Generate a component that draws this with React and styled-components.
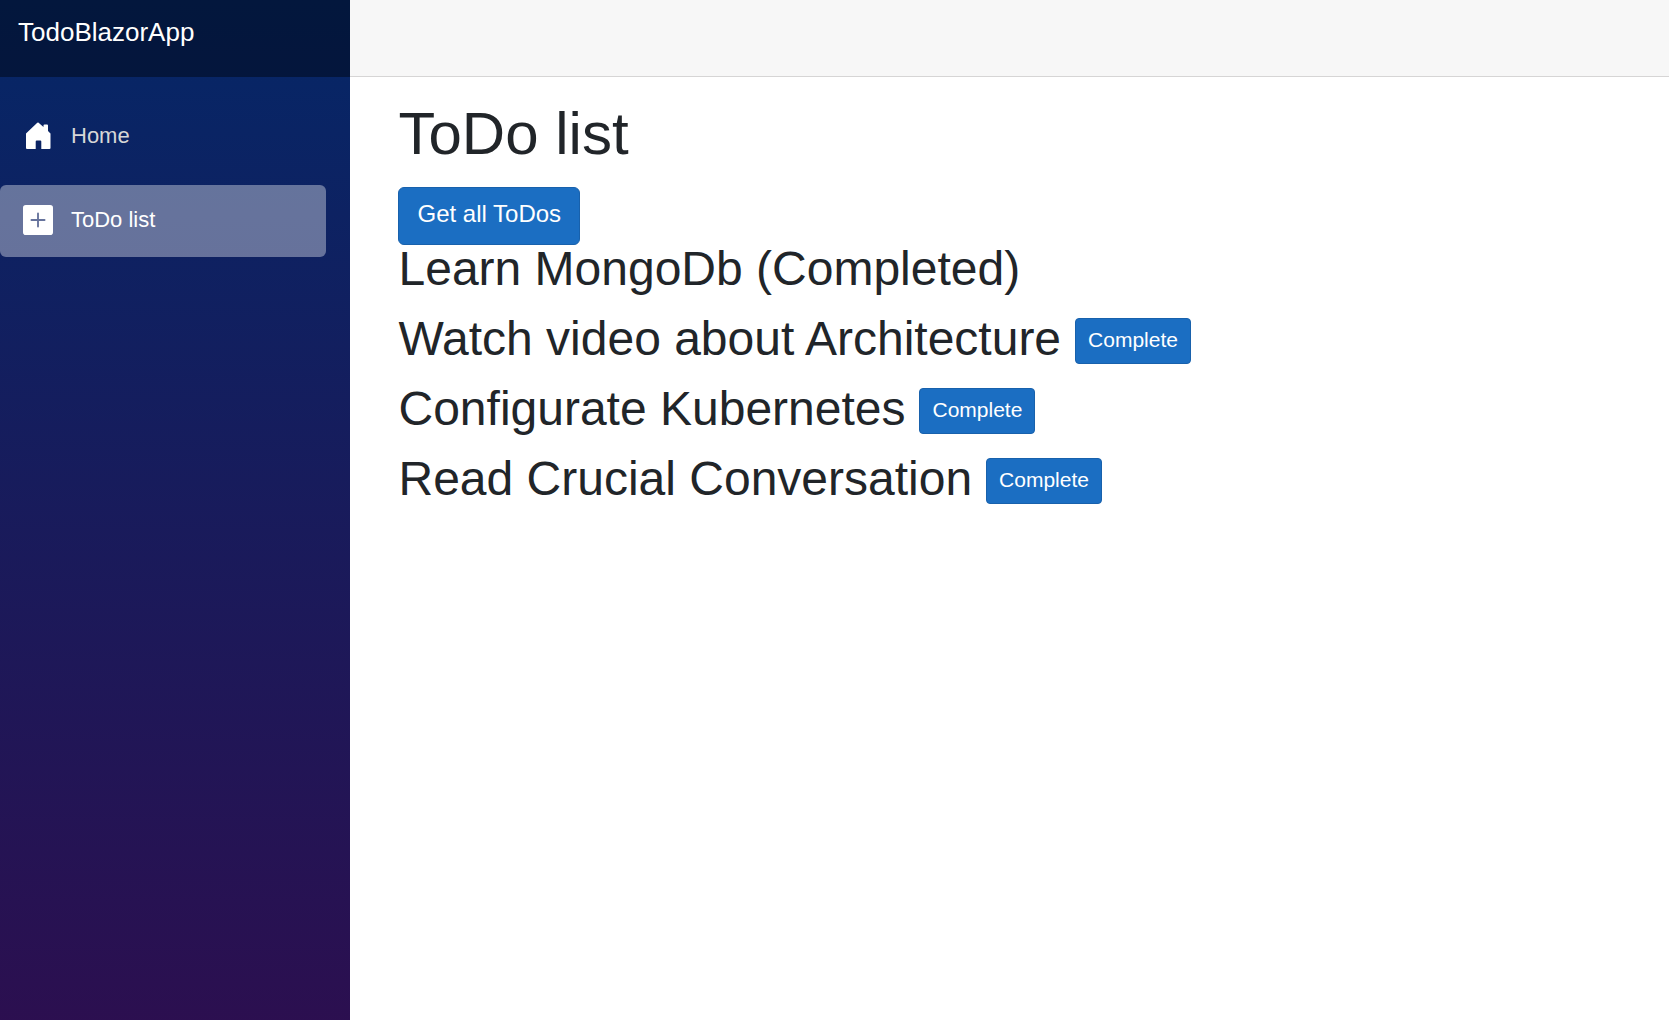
import React from "react";
import styled, { createGlobalStyle } from "styled-components";

const Global = createGlobalStyle`
  *, *::before, *::after { box-sizing: border-box; }
  body {
    margin: 0;
    font-family: "Liberation Sans", Arial, sans-serif;
    font-size: 22px;
    line-height: 1.5;
    color: #212529;
    background: #fff;
  }
`;

const Page = styled.div`
  display: flex;
  min-height: 100vh;
`;

const Sidebar = styled.aside`
  flex: 0 0 21%;
  background: linear-gradient(180deg, rgb(5, 39, 103) 0%, #3a0647 138%);
`;

const Brand = styled.header`
  height: 77px;
  padding: 12px 18px;
  background: rgba(0, 0, 0, 0.4);
`;

const BrandLink = styled.a`
  color: #fff;
  font-size: 26px;
  line-height: 40px;
  text-decoration: none;
`;

const Nav = styled.nav`
  display: flex;
  flex-direction: column;
  gap: 12px;
  padding: 24px 24px 0 0;
`;

const NavItem = styled.a`
  display: flex;
  align-items: center;
  gap: 18px;
  height: 72px;
  padding: 0 23px 2px;
  border-radius: 6px;
  font-size: 22px;
  text-decoration: none;
  color: ${(p) => (p.$active ? "#fff" : "#d7d7d7")};
  background: ${(p) => (p.$active ? "rgba(255, 255, 255, 0.37)" : "transparent")};
`;

const NavLabel = styled.span`
  padding-bottom: 2px;
`;

const Icon = styled.svg`
  width: 30px;
  height: 30px;
  fill: #fff;
`;

const Main = styled.main`
  flex: 1;
  min-width: 0;
`;

const TopRow = styled.div`
  height: 77px;
  background: #f7f7f7;
  border-bottom: 1px solid #d6d5d5;
`;

const Content = styled.article`
  padding: 23px 48px;
`;

const Title = styled.h1`
  margin: 0 0 19px;
  font-size: 60px;
  line-height: 68px;
  font-weight: 400;
`;

const Button = styled.button`
  display: block;
  font-family: inherit;
  font-size: ${(p) => (p.$small ? "21px" : "24px")};
  line-height: ${(p) => (p.$small ? "30px" : "36px")};
  padding: ${(p) => (p.$small ? "6px 12px 8px" : "8px 18px 12px")};
  border: 1px solid #1861ac;
  border-radius: ${(p) => (p.$small ? "4px" : "6px")};
  color: #fff;
  background: #1b6ec2;
`;

const Todo = styled.div`
  display: flex;
  align-items: center;
  gap: 14px;
  margin-bottom: 18px;
`;

const TodoName = styled.h2`
  margin: 0;
  padding-bottom: 4px;
  font-size: 48px;
  line-height: 48px;
  font-weight: 400;
`;

const todos = [
  { text: "Learn MongoDb", done: true },
  { text: "Watch video about Architecture" },
  { text: "Configurate Kubernetes" },
  { text: "Read Crucial Conversation" },
];

export default function App() {
  return (
    <Page>
      <Global />
      <Sidebar>
        <Brand>
          <BrandLink href="#">TodoBlazorApp</BrandLink>
        </Brand>
        <Nav>
          <NavItem href="#home">
            <Icon viewBox="0 0 30 30" aria-hidden="true">
              <path d="M15.300 1.500 20.500 6V4.500q0-1 1-1H24q1 0 1 1V10l2.500 2.500V27q0 1-1 1H18.300V20.500q0-1-1-1h-3.600q-1 0-1 1V28H4q-1 0-1-1V12.500L14 1.900q.6-.7 1.300-.4Z" />
            </Icon>
            <NavLabel>Home</NavLabel>
          </NavItem>
          <NavItem href="#todo" $active aria-current="page">
            <Icon viewBox="0 0 16 16" aria-hidden="true">
              <path d="M1.500 0A1.500 1.500 0 0 0 0 1.500v13A1.500 1.500 0 0 0 1.500 16h13a1.500 1.500 0 0 0 1.500-1.500v-13A1.500 1.500 0 0 0 14.500 0zm7 4.500v3h3a.5.5 0 0 1 0 1h-3v3a.5.5 0 0 1-1 0v-3h-3a.5.5 0 0 1 0-1h3v-3a.5.5 0 0 1 1 0z" />
            </Icon>
            <NavLabel>ToDo list</NavLabel>
          </NavItem>
        </Nav>
      </Sidebar>
      <Main>
        <TopRow />
        <Content>
          <Title>ToDo list</Title>
          <Button type="button">Get all ToDos</Button>
          {todos.map((t) => (
            <Todo key={t.text}>
              <TodoName>{t.done ? `${t.text} (Completed)` : t.text}</TodoName>
              {!t.done && <Button type="button" $small>Complete</Button>}
            </Todo>
          ))}
        </Content>
      </Main>
    </Page>
  );
}
